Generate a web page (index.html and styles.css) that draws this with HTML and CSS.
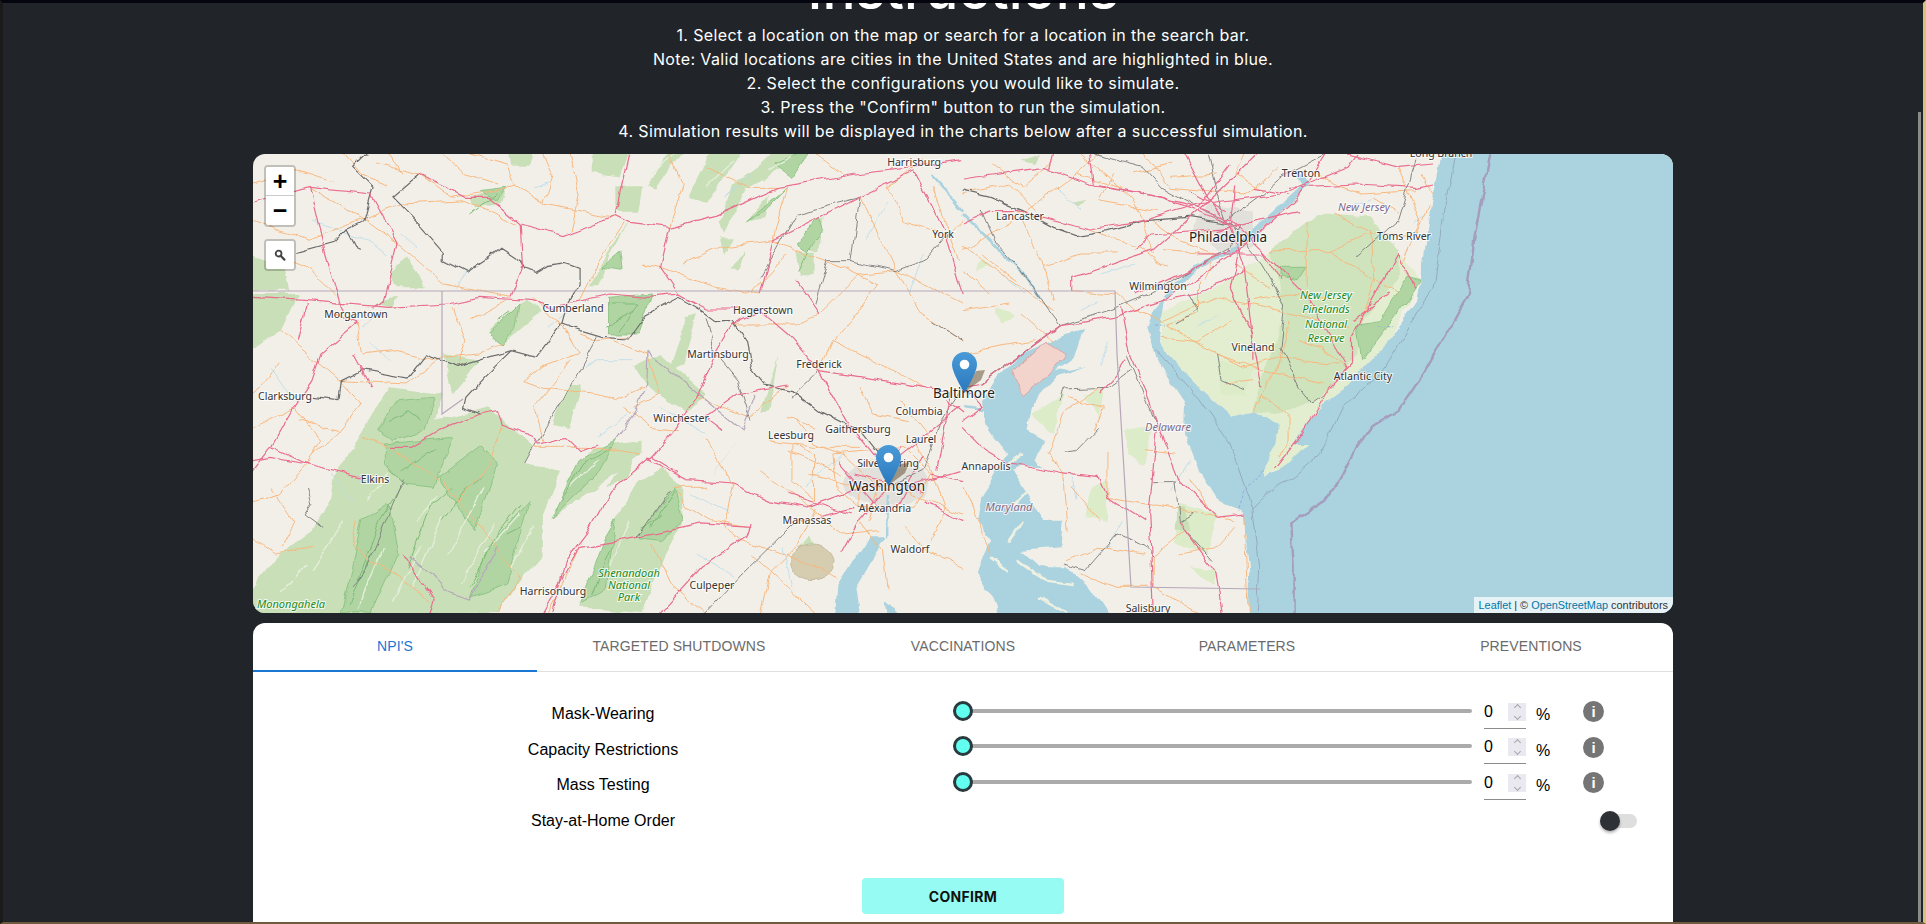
FILE: index.html
```html
<!DOCTYPE html>
<html>
	<head>
		<meta charset="UTF-8">
		<title>Instructions</title>
		<link rel="stylesheet" href="styles.css">
	</head>
	<body>
		<div class="frame">
			<div class="scrollThumb"></div>
			<div class="content">
				<h1 class="title">Instructions</h1>
				<div class="steps">
					<p>1. Select a location on the map or search for a location in the search bar.</p>
					<p>Note: Valid locations are cities in the United States and are highlighted in blue.</p>
					<p>2. Select the configurations you would like to simulate.</p>
					<p>3. Press the "Confirm" button to run the simulation.</p>
					<p>4. Simulation results will be displayed in the charts below after a successful simulation.</p>
				</div>

				<div class="map">
					<svg class="mapArt" width="1420" height="459" xmlns="http://www.w3.org/2000/svg">
						<defs>
							<filter id="wobble" x="-30" y="-30" width="1480" height="519" filterUnits="userSpaceOnUse" color-interpolation-filters="sRGB">
								<feTurbulence type="fractalNoise" baseFrequency=".045" numOctaves="3" seed="4"/>
								<feDisplacementMap in="SourceGraphic" scale="8" xChannelSelector="R" yChannelSelector="G"/>
								<feGaussianBlur stdDeviation=".25"/>
							</filter>
						</defs>
						<g filter="url(#wobble)">
						<!-- west half, coords taken from a 1568x1377 view -->
						<g transform="scale(.4529 .3333)">
							<g class="forest">
								<path d="M180,960 L300,700 L420,720 L400,800 L520,760 L620,880 L600,930 L680,950 L640,1080 L640,1200 L590,1280 L540,1377 L-20,1400 L-20,1330 L60,1200 L130,1130 L170,1040 Z"/>
								<path d="M660,1090 L700,970 L750,880 L860,860 L860,900 L760,1000 Z"/>
								<path d="M720,1360 L770,1170 L850,980 L900,940 L950,1000 L950,1100 L910,1200 L860,1377 Z"/>
								<path d="M660,810 L700,690 L730,690 L700,820 Z"/>
								<path d="M750,-10 L830,-10 L810,70 L750,60 Z"/>
								<path d="M870,100 L920,-10 L950,-10 L890,110 Z"/>
								<path d="M960,130 L1010,-10 L1080,-10 L1000,150 Z"/>
								<path d="M1040,240 L1090,100 L1240,-10 L1160,-10 L1060,90 L1030,200 Z"/>
								<path d="M1100,60 L1150,-10 L1200,-10 L1130,80 Z"/>
								<path d="M800,100 L860,100 L850,170 L800,170 Z"/>
								<path d="M740,400 L800,260 L830,200 L790,300 L760,400 Z"/>
								<path d="M-20,420 L100,420 L60,530 L-20,600 Z"/>
								<path d="M-20,300 L70,340 L80,410 L-20,410 Z"/>
								<path d="M300,370 L340,310 L380,400 L310,400 Z"/>
								<path d="M420,600 L500,620 L440,720 Z"/>
								<path d="M520,530 L600,440 L640,470 L560,560 Z"/>
								<path d="M565,-10 L620,-10 L610,35 L570,35 Z"/>
								<path d="M480,130 L560,100 L550,150 L490,160 Z"/>
								<path d="M1200,270 L1260,190 L1250,290 Z"/>
								<path d="M1200,290 L1240,290 L1240,370 L1210,370 Z"/>
								<path d="M1030,250 L1060,250 L1040,300 Z"/>
								<path d="M870,700 L840,640 L900,600 L1000,720 L960,780 L910,730 Z"/>
								<path d="M920,650 L960,490 L980,480 L950,630 Z"/>
								<path d="M1000,980 L1080,840 L1030,930 Z"/>
								<path d="M270,450 L320,420 L310,460 Z"/>
								<path d="M1090,200 L1140,120 L1130,190 Z"/>
								<path d="M780,1000 L860,860 L820,980 Z"/>
								<path d="M1120,780 L1160,600 L1140,770 Z"/>
								<path d="M1050,340 L1090,290 L1070,350 Z"/>
								<path d="M1190,1210 L1230,1150 L1250,1190 Z"/>
							</g>
							<g class="dense">
								<path d="M195,1377 L240,1100 L300,1050 L320,1200 L260,1377 Z"/>
								<path d="M290,870 L440,850 L400,1000 L330,990 L290,930 Z"/>
								<path d="M410,970 L500,880 L540,930 L490,1130 L450,1060 Z"/>
								<path d="M660,1090 L720,920 L800,860 L760,960 Z"/>
								<path d="M850,1150 L930,1000 L950,1100 L900,1160 Z"/>
								<path d="M720,1350 L770,1170 L800,1100 L780,1300 Z"/>
								<path d="M520,1180 L610,1040 L560,1290 L480,1330 Z"/>
								<path d="M785,430 L880,420 L850,540 L785,540 Z"/>
								<path d="M275,830 L320,740 L400,730 L380,830 L310,860 Z"/>
								<path d="M1200,270 L1250,190 L1260,230 L1225,290 Z"/>
								<path d="M770,340 L810,295 L815,350 Z"/>
								<path d="M520,540 L590,450 L580,520 L550,570 Z"/>
								<path d="M500,110 L560,100 L540,140 Z"/>
								<path d="M1090,200 L1180,100 L1130,170 Z"/>
								<path d="M1150,30 L1230,-10 L1190,70 Z"/>
							</g>
							<g class="streak">
								<path d="M230,1370 L290,1180 M350,1300 L420,1090 M430,1200 L510,1000 M510,1200 L590,1080 M570,1240 L620,1120 M360,1100 L410,1020 M880,60 L930,0 M1000,100 L1060,20 M1140,50 L1190,10 M130,1250 L200,1100 M60,1320 L120,1230"/>
								<path d="M310,1340 L370,1180 M460,1290 L530,1110 M250,1040 L300,960 M700,1000 L760,920 M790,1240 L830,1100"/>
							</g>
							<g class="ridge">
								<path d="M230,1280 L280,1100 L330,990 L300,950 M420,1100 L470,1010 L510,960 M480,1300 L530,1160 L590,1050 M680,1040 L730,930 L790,880 M880,1120 L930,1010 M790,450 L850,450 L810,530 M300,800 L340,770 L370,800 M330,950 L400,880 M210,1350 L260,1200"/>
								<path d="M340,1240 L390,1060 L440,1000 M560,1140 L590,1120 M750,1320 L790,1180 M1205,350 L1230,280 M540,500 L570,470 M480,180 L540,120 M860,1120 L900,1090 M780,520 L840,470"/>
							</g>
							<g class="urban">
								<ellipse cx="1400" cy="985" rx="95" ry="70"/>
							</g>
							<ellipse class="reserve" cx="1235" cy="1225" rx="48" ry="52"/>
							<path class="water" d="M1400,1150 L1370,1150 L1330,1200 L1290,1290 L1285,1400 L1340,1400 L1330,1300 L1360,1230 Z"/>
							<path class="water" d="M1395,1340 L1440,1400 L1400,1400 Z"/>
							<path class="river" d="M1402,1020 L1400,1150"/>
							<path class="river" d="M1495,60 L1530,110 L1568,170"/>
							<g class="stream">
								<path d="M130,200 L240,250 L300,300 M260,560 L300,620 M620,100 L650,80 M1040,130 L1100,60 M840,620 L760,620 L730,640 M830,780 L760,850 M1050,1070 L970,1020 M980,1200 L1060,1270 M360,280 L330,240 M1300,900 L1220,1000 M470,350 L450,400 M240,520 L280,470 M900,760 L1000,840 M40,640 L80,720 M170,960 L220,1040 M650,520 L700,470 M1170,1180 L1190,1300 M1400,150 L1350,260 M1480,300 L1450,420"/>
							</g>
							<g class="orange">
								<path d="M0,200 L120,260 L230,200 L330,150 L470,140 L580,210"/>
								<path d="M270,30 L370,60 L440,130 L580,100 L640,150 L800,190"/>
								<path d="M580,100 L560,30 L480,0"/>
								<path d="M120,100 L240,190 L320,270 L420,390 L570,430"/>
								<path d="M60,530 L120,600 L190,680 L240,750 L180,850 L130,900 L115,930"/>
								<path d="M190,680 L340,690 L420,610 L500,600 L550,565"/>
								<path d="M230,510 L240,600 L310,590 L400,620"/>
								<path d="M0,820 L60,780 L90,760 L150,860 L130,900"/>
								<path d="M0,1040 L60,1020 L120,930"/>
								<path d="M620,430 L690,530 L720,600 L640,640 L600,680 L640,700 L760,715 L800,740 L860,700"/>
								<path d="M720,540 L760,560 L830,550"/>
								<path d="M820,205 L760,330 L720,440"/>
								<path d="M1060,510 L1200,510 L1250,480 L1340,360 L1420,350 L1568,450"/>
								<path d="M950,330 L1030,280 L1150,260 L1300,340 L1380,390 L1330,480 L1280,560 L1250,650"/>
								<path d="M1150,260 L1180,100"/>
								<path d="M1340,130 L1390,260 L1420,350 L1470,470 L1568,560"/>
								<path d="M1480,20 L1400,100 L1440,200 L1530,250 L1568,200"/>
								<path d="M1280,560 L1400,640 L1480,700"/>
								<path d="M980,730 L1100,790 L1180,690"/>
								<path d="M1190,870 L1190,980 L1240,1040 L1240,900 L1190,870"/>
								<path d="M1140,860 L1240,880 L1340,880"/>
								<path d="M1000,1000 L930,1000 L960,1060 L1010,1100 L1090,1120"/>
								<path d="M1120,950 L1230,1060 L1300,1140 L1380,1130"/>
								<path d="M1080,1160 L1190,1210 L1290,1270"/>
								<path d="M1440,1120 L1480,1180 L1568,1240"/>
								<path d="M880,1170 L920,1290 L1000,1377"/>
								<path d="M720,1180 L680,1300 L650,1377"/>
								<path d="M410,980 L300,880"/>
								<path d="M420,980 L450,1040 L520,1150 L590,1270 L540,1377"/>
								<path d="M0,1150 L50,1200 L130,1180"/>
								<path d="M230,1100 L220,1180 L320,1270 L390,1340"/>
								<path d="M550,810 L520,930 L450,1050"/>
								<path d="M620,880 L760,880 L860,900"/>
								<path d="M1400,990 L1568,1080"/>
								<path d="M1280,900 L1290,1000 L1340,1060 L1460,1060 L1500,960 L1440,880 Z"/>
								<path d="M800,560 L870,600 L900,720 L840,760"/>
								<path d="M1500,100 L1560,320"/>
								<path d="M1200,800 L1240,870 L1300,900"/>
								<path d="M1100,1200 L1180,1300 L1240,1377"/>
								<path d="M0,90 L90,50 L180,80 M200,0 L240,60 L300,90 M40,300 L120,340 L180,420 M300,0 L330,60 M420,0 L470,60 L540,90"/>
								<path d="M640,0 L660,60 L640,150 M700,0 L720,120 L700,230 M920,0 L950,90 L920,220 M1000,40 L1100,100 L1160,100 M1240,0 L1300,60"/>
								<path d="M1180,300 L1100,420 M860,330 L900,340 L1020,400 L1120,420 M440,460 L470,560 L450,640 M480,500 L560,440 M60,620 L20,700 L0,720"/>
								<path d="M100,800 L190,830 M240,850 L300,880 M40,1000 L90,1100 L60,1180 M700,620 L620,760 L640,860 M820,760 L880,820 L940,830"/>
								<path d="M1000,860 L1060,1000 M1060,990 L1040,1120 L1080,1160 M1240,1060 L1200,1180 L1140,1260 L1120,1377 M1340,1100 L1390,1190 L1400,1300"/>
								<path d="M1460,860 L1500,950 L1530,1060 L1500,1160 M1340,700 L1370,780 L1450,800 M1430,740 L1500,860 M1180,890 L1300,960 M1230,960 L1340,1000 L1340,1060 M1300,900 L1380,1000 L1360,1100 M1240,820 L1180,790"/>
							</g>
							<g class="rail">
								<path d="M1000,490 L1020,600 L1070,680 L1100,800"/>
								<path d="M760,550 L680,750 L620,880 L600,930"/>
								<path d="M1120,370 L1200,180 L1340,130 L1320,320 L1270,320 L1240,450"/>
								<path d="M1320,320 L1420,350 L1460,330 L1490,310 L1540,230"/>
								<path d="M1250,650 L1190,730"/>
								<path d="M920,1010 L850,1150"/>
								<path d="M1200,1100 L1080,1260 L1000,1377"/>
								<path d="M330,980 L290,1110 L240,1270 L220,1300"/>
								<path d="M120,1000 L130,1050 L115,1080 L155,1120"/>
								<path d="M1500,500 L1568,560"/>
								<path d="M1340,1060 L1400,1070"/>
								<path d="M1568,700 L1520,800 L1480,950 L1420,990"/>
							</g>
							<g class="rail thick">
								<path d="M375,220 L420,290 L420,320 L470,355 L520,310 L545,280 L590,320 L600,345 L625,355 L650,335 L690,325 L720,340 L720,390 L690,460 L680,510 L625,610 L570,590 L450,640 L380,605 L340,675 L240,650 L195,680 L190,740 L130,730"/>
								<path d="M250,0 L220,40 L265,100 L245,200 L210,225 L235,290"/>
								<path d="M370,60 L310,130 L375,220"/>
								<path d="M210,225 L180,265 L100,295"/>
								<path d="M680,510 L720,530 L770,550 L830,555 L870,480 L940,430 L990,470 L1020,500 L1060,500 L1090,560 L1100,640 L1130,690 L1190,710 L1250,770 L1340,830 L1380,900"/>
								<path d="M570,590 L510,670 L470,730 L465,760 L500,780"/>
							</g>
							<g class="pink">
								<path d="M0,150 L125,100 L260,120 L320,270 L290,440 L260,460"/>
								<path d="M370,60 L470,130 L520,130 L590,210 L680,245 L720,225 L800,185 L830,205 L920,220 L1020,185 L1160,100 L1330,60 L1460,40 L1568,20"/>
								<path d="M0,430 L120,440 L300,460 L430,450 L500,430 L620,440 L660,460 L790,420 L870,430 L940,420 L1000,465 L1120,465"/>
								<path d="M590,210 L595,340 L570,430"/>
								<path d="M830,0 L800,180"/>
								<path d="M920,220 L900,340 L940,420"/>
								<path d="M230,510 L150,600 L130,680 L90,760 L40,880 L0,950"/>
								<path d="M0,920 L40,910 L120,930 L240,970"/>
								<path d="M410,830 L500,780 L540,770 L550,810 L620,850 L630,870 L690,850 L720,890 L760,870"/>
								<path d="M1120,470 L1060,510 L1020,600 L980,730 L930,830 L880,910 L790,1010 L740,1130 L690,1220 L660,1377"/>
								<path d="M870,915 L960,980 L1060,990 L1140,1040 L1220,1060 L1320,1010 L1400,990"/>
								<path d="M1120,470 L1180,540 L1250,650 L1350,670 L1480,700 L1550,710"/>
								<path d="M1250,650 L1320,820 L1380,920"/>
								<path d="M1180,690 L1070,720 L1000,790 L1040,830"/>
								<path d="M1400,1000 L1340,1100 L1300,1200"/>
								<path d="M1460,990 L1560,950"/>
								<path d="M1330,1060 L1200,1100"/>
								<path d="M1100,1110 L1090,1150 L990,1240 L900,1377"/>
								<path d="M1120,420 L1150,260 L1340,130 L1460,50"/>
								<path d="M1460,50 L1530,240 L1568,420"/>
								<path d="M1390,950 L1560,760"/>
								<path d="M125,100 L160,300 L200,480"/>
								<path d="M640,1377 L720,1180 L850,1150 L990,1110 L1100,1120"/>
								<path d="M330,1200 L400,1340 L390,1377"/>
								<path d="M1180,1020 L1320,1080 M1290,920 L1380,1060 M1480,900 L1420,1060 M1330,960 L1480,1010 M1500,960 L1568,980 M1430,880 L1400,960"/>
								<path d="M1530,740 L1568,780 M1545,700 L1530,800 L1510,950 M1250,480 L1200,380 M1480,1040 L1568,1100"/>
								<path d="M40,880 L120,930 M220,600 L260,700 M410,830 L350,880 L300,880 M120,450 L100,560 M170,480 L230,510 M880,910 L940,960"/>
							</g>
							<g class="border">
								<path d="M872,595 L1080,830 L1110,720"/>
								<path d="M872,595 L870,680 L840,780 L800,860"/>
								<path d="M345,1210 L400,1260 L420,1310 L480,1335 L540,1180"/>
							</g>
						</g>

						<!-- east half, same scale -->
						<g transform="translate(710 0) scale(.4529 .3333)">
							<path class="coastGreen" d="M430,480 L560,400 L680,290 L900,190 L1010,380 L940,560 L850,690 L800,740 L740,850 L690,950 L665,968 L665,930 L690,870 L695,810 L640,770 L590,785 L520,700 L445,590 Z"/>
							<path class="njForest" d="M680,290 L780,180 L900,190 L960,290 L960,380 L880,500 L870,600 L810,700 L770,750 L690,780 L640,770 L670,640 L710,480 Z"/>
							<path class="dense" d="M920,500 L980,370 L1010,380 L970,460 L880,620 L870,510 Z"/>
							<path class="dense" d="M700,340 L760,340 L740,380 L700,370 Z"/>
							<path class="pale" d="M40,310 L60,330 L30,360 Z M270,720 L310,700 L300,790 Z M360,830 L420,810 L400,940 L360,900 Z M480,1050 L560,1080 L540,1200 L470,1170 Z M500,1240 L560,1250 L550,1300 Z M280,1000 L320,980 L320,1100 L270,1090 Z M150,780 L220,720 L200,840 Z M70,460 L120,480 L90,510 Z M560,620 L640,640 L620,730 L570,720 Z"/>
							<path class="forest" d="M130,20 L170,0 L160,30 Z M240,150 L270,140 L255,160 Z M470,1060 L490,1060 L500,1130 L470,1130 Z"/>
							<path class="urban" d="M540,150 L640,170 L640,280 L570,290 L500,230 Z"/>
							<path class="water" d="M1060,-30 L1640,-30 L1640,1420 L628,1420 L632,1250 L618,1075 L560,1030 L510,920 L488,840 L490,750 L460,690 L425,610 L405,520 L420,470 L445,430 L440,470 L430,520 L445,590 L520,700 L590,785 L640,770 L695,810 L690,870 L665,930 L665,968 L700,950 L740,850 L800,740 L850,690 L940,560 L1000,440 L1012,370 L1022,270 L1035,150 L1050,50 Z"/>
							<path class="water" d="M225,540 L265,525 L245,610 L205,650 L235,650 L270,640 L210,670 L150,760 L140,830 L180,860 L160,920 L180,940 L130,935 L110,950 L130,1000 L170,1080 L180,1100 L220,1100 L215,1180 L130,1190 L170,1240 L230,1240 L280,1300 L340,1420 L90,1420 L60,1320 L30,1250 L60,1160 L30,1100 L40,1040 L70,960 L100,900 L70,850 L50,810 L40,750 L70,680 L130,600 Z"/>
							<path class="reserve pinkArea" d="M105,650 L185,565 L228,600 L190,660 L135,725 Z"/>
							<path class="landFinger" d="M120,1220 L180,1280 L240,1290 M150,1000 L110,1060 M130,1100 L100,1160 M130,900 L90,940 M170,1330 L230,1377 M60,1210 L100,1250"/>
							<path class="coastGreen" d="M665,960 L690,870 L760,870 L700,950 Z"/>
							<path class="river wide" d="M445,430 L510,340 L600,290 L680,190 L760,90 L735,60"/>
							<path class="river" d="M0,180 L60,260 L130,350 L170,430"/>
							<path class="river" d="M0,760 L55,770"/>
							<g class="stream">
								<path d="M200,100 L260,170 M80,350 L140,420 M300,360 L380,330 M860,160 L900,140 M560,480 L520,520 M320,560 L300,640 M250,1040 L240,960 M1000,200 L1020,180 M460,1010 L500,920 M350,1100 L320,1180 M260,470 L300,440"/>
							</g>
							<g class="orange">
								<path d="M0,290 L100,210 L180,130 L250,60"/>
								<path d="M120,170 L180,340 L200,440"/>
								<path d="M280,225 L390,280 L450,340"/>
								<path d="M0,280 L100,370 L200,470"/>
								<path d="M260,0 L370,130 L400,200 L420,300"/>
								<path d="M60,30 L130,100 L200,20"/>
								<path d="M100,450 L0,470"/>
								<path d="M240,410 L340,420 L380,470 L440,500 L560,430 L700,470 L850,520"/>
								<path d="M520,380 L520,480 L450,510 L560,600 L620,640 L700,610 L830,630"/>
								<path d="M680,290 L810,290 L890,240 L1000,240 L1030,150"/>
								<path d="M810,290 L960,420"/>
								<path d="M760,200 L760,400"/>
								<path d="M900,230 L910,380 L880,500"/>
								<path d="M660,720 L720,790 L720,860 L700,910"/>
								<path d="M560,600 L660,650 L800,690"/>
								<path d="M300,700 L220,780 L190,900 L220,960 L230,1130"/>
								<path d="M320,900 L320,1030 L420,1050 L600,1100"/>
								<path d="M400,1200 L300,1180 L230,1220"/>
								<path d="M490,1130 L420,1210 L420,1300 L520,1377"/>
								<path d="M620,1080 L630,1377"/>
								<path d="M0,1000 L60,1200"/>
								<path d="M40,300 L120,380"/>
								<path d="M720,500 L690,650 L640,770"/>
								<path d="M960,40 L1010,200 L970,330"/>
								<path d="M400,0 L460,100 L620,120 L700,40"/>
								<path d="M620,0 L600,60 L660,110 M330,60 L300,140 L430,170"/>
								<path d="M0,120 L100,90 L160,170"/>
								<path d="M440,290 L560,300 L530,380"/>
								<path d="M160,560 L0,600"/>
								<path d="M780,60 L880,120 L1000,110"/>
								<path d="M300,0 L250,60 L350,100 M0,350 L60,420 M180,340 L260,300 L340,300 M420,200 L480,260 L560,300 M380,60 L460,30 M600,330 L680,400 M640,440 L720,420 L800,430"/>
								<path d="M440,550 L520,560 L590,500 M580,690 L640,680 M740,560 L800,590 L850,640 M900,130 L960,180 M820,180 L900,230 M1010,60 L1040,120"/>
								<path d="M240,1000 L300,1100 M480,1200 L560,1180 L600,1120 M260,1260 L340,1300 L410,1300 M130,480 L200,560 M230,730 L310,760 L290,830 M400,890 L470,900 M500,970 L540,1060 M460,70 L560,60"/>
							</g>
							<g class="rail">
								<path d="M290,0 L400,40 L440,100 L520,160 L590,210"/>
								<path d="M800,0 L700,70 L650,130 L580,200"/>
								<path d="M540,0 L560,120 L580,200"/>
								<path d="M40,170 L70,260 L130,350 L190,470 L215,515 L320,470 L410,420 L500,350 L590,280 L610,210"/>
								<path d="M590,210 L660,330 L710,450 L700,580 L740,700 L770,750 L800,720"/>
								<path d="M1000,20 L960,200 L870,305"/>
								<path d="M560,600 L570,680 L620,710"/>
								<path d="M210,740 L220,705 L320,700 L370,650"/>
								<path d="M300,820 L250,890 L225,895"/>
								<path d="M225,1230 L270,1250 L340,1140 L400,1180 L420,1210"/>
								<path d="M420,980 L470,980 L480,1100 L510,1075"/>
								<path d="M490,1130 L550,1220"/>
								<path d="M500,420 L520,470 L470,510"/>
								<path d="M360,600 L400,730 L430,810"/>
							</g>
							<g class="rail thick">
								<path d="M0,110 L60,130 L130,170 L200,220 L250,245 L320,230 L400,200 L500,190 L590,210"/>
								<path d="M215,515 L100,630 L40,690"/>
							</g>
							<g class="pink">
								<path d="M0,75 L180,40 L280,90 L440,130 L520,160 L590,200 L660,290 L760,430 L850,640 L830,670"/>
								<path d="M0,210 L60,170 L120,170 L280,225 L400,200 L520,150 L700,120 L850,40 L870,0"/>
								<path d="M280,0 L290,90 L440,130 L590,210"/>
								<path d="M490,0 L540,130 L590,220 L620,330 L640,560 L660,700"/>
								<path d="M650,0 L560,120 L420,290 L240,370 L240,410"/>
								<path d="M800,0 L740,130 L610,290 L440,440 L330,490 L215,515 L100,630 L40,690"/>
								<path d="M720,100 L870,90 L1000,100 L1040,90"/>
								<path d="M850,0 L960,40 L1040,30"/>
								<path d="M610,290 L590,400 L640,540 L640,620"/>
								<path d="M0,820 L50,890 L100,930 L170,945 L220,960 L300,970 L320,1030 L400,1100"/>
								<path d="M350,460 L370,600 L400,700 L430,810 L410,1080 L415,1200 L420,1377"/>
								<path d="M430,810 L480,980 L560,1090 L620,1080"/>
								<path d="M480,1100 L490,1130 L555,1250 L570,1377"/>
								<path d="M1000,400 L970,340 L960,300 L860,540 L860,630 L810,700 L750,840 L690,945"/>
								<path d="M860,500 L940,420"/>
								<path d="M440,440 L520,420 L620,350"/>
								<path d="M520,160 L590,30 M590,210 L600,100 M520,300 L660,300 M660,290 L700,380 M590,220 L420,240 L380,290 M590,290 L450,380 L380,420"/>
								<path d="M40,690 L0,700 M500,110 L580,170 M640,100 L720,120 M560,230 L740,170 M200,0 L190,50 M0,700 L40,760 L0,800 M360,620 L340,660 L300,720"/>
							</g>
							<path class="maritime" d="M1088,0 L1060,200 L1040,400 L1000,480 L970,560 L930,650 L840,760 L790,900 L730,970 L690,1000 L640,1065 L655,1240 L650,1377"/>
							<path class="maritime" d="M425,590 L520,730 L590,870 L640,1065"/>
							<path class="dashes" d="M420,510 L445,510 M915,518 L950,518 M665,945 L620,1010 L605,1070"/>
							<path class="eez" d="M1168,-20 L1150,100 L1130,240 L1115,420 L1070,530 L1020,650 L960,770 L900,820 L870,880 L840,960 L800,1040 L725,1105 L730,1240 L730,1400"/>
						</g>
						</g>

						<!-- straight state lines stay out of the wobble filter -->
						<path class="border" d="M0,137 L862,137 L864,200 L878,433 L1007,435"/>
						<path class="border" d="M189,137 L189,260 L210,245"/>

						<g class="placeNames">
							<text x="661" y="12">Harrisburg</text>
							<text x="690" y="84">York</text>
							<text x="320" y="158">Cumberland</text>
							<text x="103" y="164">Morgantown</text>
							<text x="510" y="160">Hagerstown</text>
							<text x="465" y="204">Martinsburg</text>
							<text x="566" y="214">Frederick</text>
							<text x="32" y="246">Clarksburg</text>
							<text x="428" y="268">Winchester</text>
							<text x="538" y="285">Leesburg</text>
							<text x="605" y="279">Gaithersburg</text>
							<text x="666" y="261">Columbia</text>
							<text x="668" y="289">Laurel</text>
							<text x="635" y="313">Silver Spring</text>
							<text x="632" y="358">Alexandria</text>
							<text x="122" y="329">Elkins</text>
							<text x="554" y="370">Manassas</text>
							<text x="657" y="399">Waldorf</text>
							<text x="459" y="435">Culpeper</text>
							<text x="300" y="441">Harrisonburg</text>
							<text x="1188" y="3">Long Branch</text>
							<text x="1048" y="23">Trenton</text>
							<text x="767" y="66">Lancaster</text>
							<text x="1151" y="86">Toms River</text>
							<text x="905" y="136">Wilmington</text>
							<text x="1000" y="197">Vineland</text>
							<text x="1110" y="226">Atlantic City</text>
							<text x="733" y="316">Annapolis</text>
							<text x="895" y="458">Salisbury</text>
							<text class="bigCity" x="634" y="337">Washington</text>
							<text class="bigCity" x="711" y="244">Baltimore</text>
							<text class="bigCity" x="975" y="88">Philadelphia</text>
							<text class="parkName" x="38" y="454">Monongahela</text>
							<text class="parkName" x="376" y="423">Shenandoah</text>
							<text class="parkName" x="376" y="435">National</text>
							<text class="parkName" x="376" y="447">Park</text>
							<text class="parkName" x="1073" y="145">New Jersey</text>
							<text class="parkName" x="1073" y="159">Pinelands</text>
							<text class="parkName" x="1073" y="174">National</text>
							<text class="parkName" x="1073" y="188">Reserve</text>
							<text class="stateName" x="1111" y="57">New Jersey</text>
							<text class="stateName" x="915" y="277">Delaware</text>
							<text class="stateName" x="756" y="357">Maryland</text>
						</g>
					</svg>

					<div class="pinShadow shadowWashington"></div>
					<div class="pinShadow shadowBaltimore"></div>
					<svg class="pin pinWashington" width="25" height="41" viewBox="0 0 25 41" xmlns="http://www.w3.org/2000/svg">
						<defs>
							<linearGradient id="pinFill1" x1="0" y1="0" x2="0" y2="1">
								<stop offset="0" stop-color="#4a9ad8"/>
								<stop offset="1" stop-color="#2a78bd"/>
							</linearGradient>
						</defs>
						<path d="M12.5 0C5.6 0 0 5.6 0 12.5 0 21 12.5 41 12.5 41S25 21 25 12.5C25 5.6 19.4 0 12.5 0Z" fill="url(#pinFill1)"/>
						<circle cx="12.5" cy="12.5" r="4.8" fill="#fff"/>
					</svg>
					<svg class="pin pinBaltimore" width="25" height="41" viewBox="0 0 25 41" xmlns="http://www.w3.org/2000/svg">
						<path d="M12.5 0C5.6 0 0 5.6 0 12.5 0 21 12.5 41 12.5 41S25 21 25 12.5C25 5.6 19.4 0 12.5 0Z" fill="url(#pinFill1)"/>
						<circle cx="12.5" cy="12.5" r="4.8" fill="#fff"/>
					</svg>

					<div class="mapControls">
						<div class="mapBar">
							<a class="zoomBtn">+</a>
							<a class="zoomBtn minus">−</a>
						</div>
						<div class="mapBar">
							<a class="zoomBtn searchBtn">
								<svg width="12" height="12" viewBox="0 0 12 12" xmlns="http://www.w3.org/2000/svg">
									<circle cx="4.6" cy="4.6" r="2.9" fill="none" stroke="#444" stroke-width="1.8"/>
									<path d="M6.6 6.8L10.4 10.6" stroke="#444" stroke-width="2.2" stroke-linecap="round"/>
								</svg>
							</a>
						</div>
					</div>
					<div class="attribution"><a>Leaflet</a> | © <a>OpenStreetMap</a> contributors</div>
				</div>

				<div class="panel">
					<div class="tabs">
						<div class="tab active">NPI'S</div>
						<div class="tab">TARGETED SHUTDOWNS</div>
						<div class="tab">VACCINATIONS</div>
						<div class="tab">PARAMETERS</div>
						<div class="tab">PREVENTIONS</div>
					</div>
					<div class="rows">
						<div class="row">
							<div class="rowLabel">Mask-Wearing</div>
							<div class="slider"><span class="thumb"></span></div>
							<div class="numInput"><span>0</span><span class="spin"><i class="up"></i><i class="down"></i></span></div>
							<div class="pct">%</div>
							<div class="info">i</div>
						</div>
						<div class="row">
							<div class="rowLabel">Capacity Restrictions</div>
							<div class="slider"><span class="thumb"></span></div>
							<div class="numInput"><span>0</span><span class="spin"><i class="up"></i><i class="down"></i></span></div>
							<div class="pct">%</div>
							<div class="info">i</div>
						</div>
						<div class="row">
							<div class="rowLabel">Mass Testing</div>
							<div class="slider"><span class="thumb"></span></div>
							<div class="numInput"><span>0</span><span class="spin"><i class="up"></i><i class="down"></i></span></div>
							<div class="pct">%</div>
							<div class="info">i</div>
						</div>
						<div class="row lastRow">
							<div class="rowLabel">Stay-at-Home Order</div>
							<div class="switch"><span class="switchKnob"></span></div>
						</div>
					</div>
					<div class="confirmWrap">
						<button class="confirm">CONFIRM</button>
					</div>
				</div>
			</div>
		</div>
	</body>
</html>
```

FILE: styles.css
```css
*{
	margin: 0;
	padding: 0;
	box-sizing: border-box;
}
html,body{
	height: 100%;
	overflow: hidden;
}
.frame{
	position: relative;
	width: 1926px;
	height: 924px;
	overflow: hidden;
	background: #212529;
	border-top: 3px solid #05050f;
	border-left: 3px solid #1a1a1a;
	border-right: 3px solid #d9c37a;
	border-bottom: 2px solid #6f5a3e;
}
.scrollThumb{
	position: absolute;
	right: 2px;
	top: 109px;
	bottom: 0;
	width: 3px;
	background: #8a8a8a;
}
.content{
	width: 1420px;
	margin: 0 auto;
}
.title{
	margin-top: -47px;
	height: 67px;
	line-height: 67px;
	text-align: center;
	font-family: Inter, "Open Sans", sans-serif;
	font-size: 55px;
	font-weight: 500;
	color: #fff;
}
.steps{
	height: 131px;
	text-align: center;
	color: #fff;
	font-family: Inter, "Open Sans", sans-serif;
	font-size: 16px;
	letter-spacing: .38px;
	line-height: 24px;
}

/* map */
.map{
	position: relative;
	height: 459px;
	border-radius: 12px;
	overflow: hidden;
	background: #f2efe9;
}
.mapArt{
	display: block;
}
.mapArt path,.mapArt ellipse{
	vector-effect: non-scaling-stroke;
}
.forest path,path.forest{
	fill: #c8dfb7;
}
.njForest{
	fill: #cfe3bd;
}
.dense path,path.dense{
	fill: #b0d5a3;
	stroke: #84bf7c;
	stroke-width: .8;
}
.streak path{
	fill: none;
	stroke: #e4eeda;
	stroke-width: 1.4;
}
.ridge path{
	fill: none;
	stroke: #7fbb76;
	stroke-width: 1;
}
.pale{
	fill: #dcebc8;
}
.coastGreen{
	fill: #e3edcf;
}
.urban ellipse,path.urban{
	fill: #e2e0db;
}
.reserve{
	fill: #d6cdb0;
	stroke: #c4bca0;
}
.pinkArea{
	fill: #f3d4cd;
	stroke: #dca8a4;
}
.water{
	fill: #aad3df;
}
.landFinger{
	fill: none;
	stroke: #eef0e2;
	stroke-width: 2.5;
}
.river{
	fill: none;
	stroke: #aad3df;
	stroke-width: 2.5;
}
.river.wide{
	stroke-width: 5;
}
.stream path{
	fill: none;
	stroke: #b7dcea;
	stroke-width: .8;
}
.orange path{
	fill: none;
	stroke: #f8b87e;
	stroke-width: 1;
}
.rail path{
	fill: none;
	stroke: #7b7b7b;
	stroke-width: .9;
}
.rail.thick path{
	stroke: #6d6d6d;
	stroke-width: 1.2;
}
.pink path{
	fill: none;
	stroke: #e96d8d;
	stroke-width: 1.2;
}
.border path,path.border{
	fill: none;
	stroke: #b6a8ba;
	stroke-width: 1.2;
}
.maritime{
	fill: none;
	stroke: #92a6bd;
	stroke-width: .9;
}
.eez{
	fill: none;
	stroke: #a59dbd;
	stroke-width: 2.4;
}
.dashes{
	fill: none;
	stroke: #7aa7e0;
	stroke-width: .8;
	stroke-dasharray: 3 2;
}
.placeNames text{
	font-family: "Noto Sans", "Open Sans", sans-serif;
	font-size: 10.5px;
	fill: #333;
	stroke: #fff;
	stroke-width: 2px;
	stroke-opacity: .75;
	paint-order: stroke;
	text-anchor: middle;
}
.placeNames .bigCity{
	font-size: 13.5px;
	fill: #222;
}
.placeNames .parkName{
	font-style: italic;
	font-size: 11px;
	fill: #1c8a1c;
}
.placeNames .stateName{
	font-style: italic;
	font-size: 11px;
	fill: #7d6a8c;
}
.pin{
	position: absolute;
}
.pinWashington{
	left: 623px;
	top: 291px;
}
.pinBaltimore{
	left: 699px;
	top: 198px;
}
.pinShadow{
	position: absolute;
	width: 20px;
	height: 22px;
	background: rgba(90,70,40,.5);
	clip-path: polygon(0 100%,55% 5%,100% 0,80% 45%);
}
.shadowWashington{
	left: 636px;
	top: 309px;
}
.shadowBaltimore{
	left: 712px;
	top: 216px;
}
.mapControls{
	position: absolute;
	left: 11px;
	top: 11px;
	display: flex;
	flex-direction: column;
	gap: 12px;
}
.mapBar{
	width: 32px;
	border: 2px solid rgba(0,0,0,.2);
	border-radius: 4px;
	background-clip: padding-box;
}
.zoomBtn{
	display: block;
	width: 28px;
	height: 29px;
	line-height: 29px;
	text-align: center;
	background: #fff;
	color: #000;
	font-family: "Liberation Sans", Arial, sans-serif;
	font-size: 25px;
	font-weight: bold;
	border-bottom: 1px solid #ccc;
	border-radius: 2px 2px 0 0;
}
.zoomBtn.minus{
	border-bottom: 0;
	border-radius: 0 0 2px 2px;
}
.searchBtn{
	display: flex;
	align-items: center;
	justify-content: center;
	height: 28px;
	border-bottom: 0;
	border-radius: 2px;
}
.attribution{
	position: absolute;
	right: 0;
	bottom: 0;
	height: 16px;
	padding: 0 5px;
	line-height: 16px;
	background: rgba(255,255,255,.7);
	font-family: "Liberation Sans", Arial, sans-serif;
	font-size: 10.9px;
	color: #333;
}
.attribution a{
	color: #0078a8;
}

/* panel under the map */
.panel{
	margin-top: 10px;
	height: 320px;
	background: #fff;
	border-radius: 12px 12px 0 0;
}
.tabs{
	display: grid;
	grid-template-columns: repeat(5,1fr);
	height: 49px;
	border-bottom: 1px solid #e0e0e0;
}
.tab{
	height: 49px;
	line-height: 47px;
	text-align: center;
	font-family: "Liberation Sans", Arial, sans-serif;
	font-size: 14px;
	letter-spacing: .12px;
	color: #6b6b6b;
}
.tab.active{
	color: #1976d2;
	border-bottom: 2px solid #1976d2;
}
.rows{
	padding-top: 22px;
}
.row{
	display: grid;
	grid-template-columns: 700px 520px 42px 68px 21px;
	align-items: center;
	height: 35.5px;
	font-family: "Liberation Sans", Arial, sans-serif;
	color: #000;
}
.row.lastRow{
	height: 38.5px;
	padding-top: 3px;
	grid-template-columns: 700px 684px;
}
.rowLabel{
	text-align: center;
	font-size: 16px;
	line-height: 20px;
	padding-top: 5px;
}
.lastRow .rowLabel{
	padding-top: 0;
}
.slider{
	position: relative;
	width: 519px;
	height: 4px;
	margin-bottom: 2px;
	background: #ababab;
	border-radius: 2px;
}
.thumb{
	position: absolute;
	left: 0;
	top: -8px;
	width: 20px;
	height: 20px;
	background: #62fff0;
	border: 3px solid #2a3b40;
	border-radius: 50%;
}
.numInput{
	position: relative;
	display: flex;
	justify-content: space-between;
	height: 34px;
	padding-top: 8px;
	margin-left: 11px;
	width: 42px;
	border-bottom: 1px solid #8b8b8b;
	font-size: 16px;
	line-height: 18px;
}
.spin{
	display: flex;
	flex-direction: column;
	align-items: center;
	justify-content: center;
	gap: 4px;
	width: 18px;
	height: 18px;
	background: #e9e9ef;
}
.spin i{
	display: block;
	width: 5px;
	height: 5px;
	border-left: 1px solid #a5a5ad;
	border-top: 1px solid #a5a5ad;
}
.spin .up{
	transform: rotate(45deg);
}
.spin .down{
	transform: rotate(225deg);
}
.pct{
	margin-left: 21px;
	padding-top: 7px;
	font-size: 16px;
}
.info{
	width: 21px;
	height: 21px;
	border-radius: 50%;
	background: #757575;
	color: #fff;
	text-align: center;
	font-family: "Liberation Sans", Arial, sans-serif;
	font-size: 15px;
	font-weight: bold;
	line-height: 21px;
}
.switch{
	position: relative;
	justify-self: end;
	width: 37px;
	height: 14px;
	background: #dedede;
	border-radius: 7px;
}
.switchKnob{
	position: absolute;
	left: 0;
	top: -3px;
	width: 20px;
	height: 20px;
	background: #2e3236;
	border-radius: 50%;
	box-shadow: 0 2px 3px rgba(0,0,0,.3);
}
.confirmWrap{
	display: flex;
	justify-content: center;
	margin-top: 39px;
}
.confirm{
	width: 202px;
	height: 36px;
	background: #96fbf2;
	border: 0;
	border-radius: 4px;
	font-family: Inter, "Open Sans", sans-serif;
	font-size: 14px;
	font-weight: 700;
	letter-spacing: .3px;
	color: #111;
}
```
